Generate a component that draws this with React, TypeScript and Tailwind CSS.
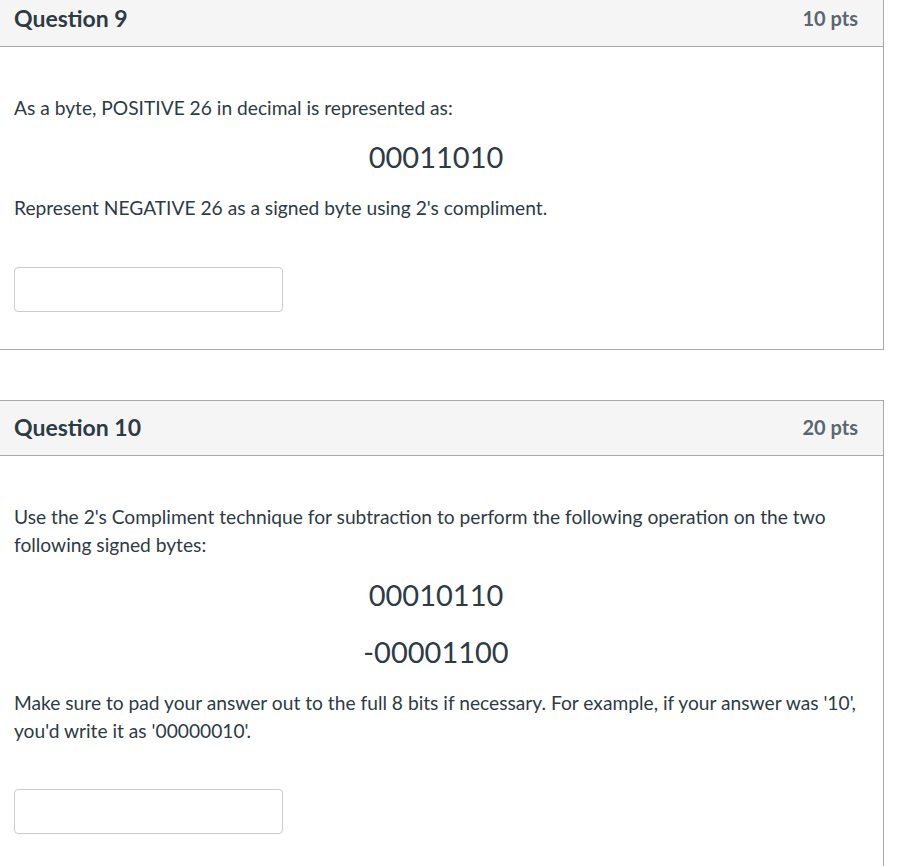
const QuestionHeader = ({ title, points }: { title: string; points: string }) => (
  <div className="flex items-center justify-between h-[55px] bg-[#f5f5f5] border-b border-[#a9a9a9] pl-[14px] pr-[25px] pb-[2px]">
    <h2 className="text-[23px] font-bold text-[#2d3b45] leading-none">{title}</h2>
    <span className="text-[20px] font-bold text-[#5b6770] leading-none">{points}</span>
  </div>
);

const AnswerBox = () => (
  <input
    type="text"
    className="w-[269px] h-[45px] border border-[#c7cdd1] rounded-[4px] bg-white outline-none"
  />
);

export default function App() {
  return (
    <div
      className="min-h-[866px] bg-white text-[#2d3b45] -mt-[9px]"
      style={{ fontFamily: "Lato, 'Open Sans', sans-serif" }}
    >
      <div className="w-[884px] border border-l-0 border-[#a9a9a9]">
        <QuestionHeader title="Question 9" points="10 pts" />
        <div className="pl-[14px] pr-[25px] pt-[47px] pb-[37px] flex flex-col">
          <p className="text-[19.2px] leading-[28px]">As a byte, POSITIVE 26 in decimal is represented as:</p>
          <p className="mt-[15px] text-[29px] leading-[40px] text-center">00011010</p>
          <p className="mt-[17px] text-[19.2px] leading-[28px]">Represent NEGATIVE 26 as a signed byte using 2's compliment.</p>
          <div className="mt-[45px]">
            <AnswerBox />
          </div>
        </div>
      </div>

      <div className="mt-[50px] w-[884px] border border-l-0 border-b-0 border-[#a9a9a9] min-h-[470px]">
        <QuestionHeader title="Question 10" points="20 pts" />
        <div className="pl-[14px] pr-[25px] pt-[47px] pb-[37px] flex flex-col">
          <p className="text-[19.2px] leading-[28px]">
            Use the 2's Compliment technique for subtraction to perform the following operation on the two following signed bytes:
          </p>
          <p className="mt-[16px] text-[29px] leading-[40px] text-center">00010110</p>
          <p className="mt-[17px] text-[29px] leading-[40px] text-center">-00001100</p>
          <p className="mt-[17px] text-[19.2px] leading-[28px]">
            Make sure to pad your answer out to the full 8 bits if necessary. For example, if your answer was '10', you'd write it as '00000010'.
          </p>
          <div className="mt-[44px]">
            <AnswerBox />
          </div>
        </div>
      </div>
    </div>
  );
}
